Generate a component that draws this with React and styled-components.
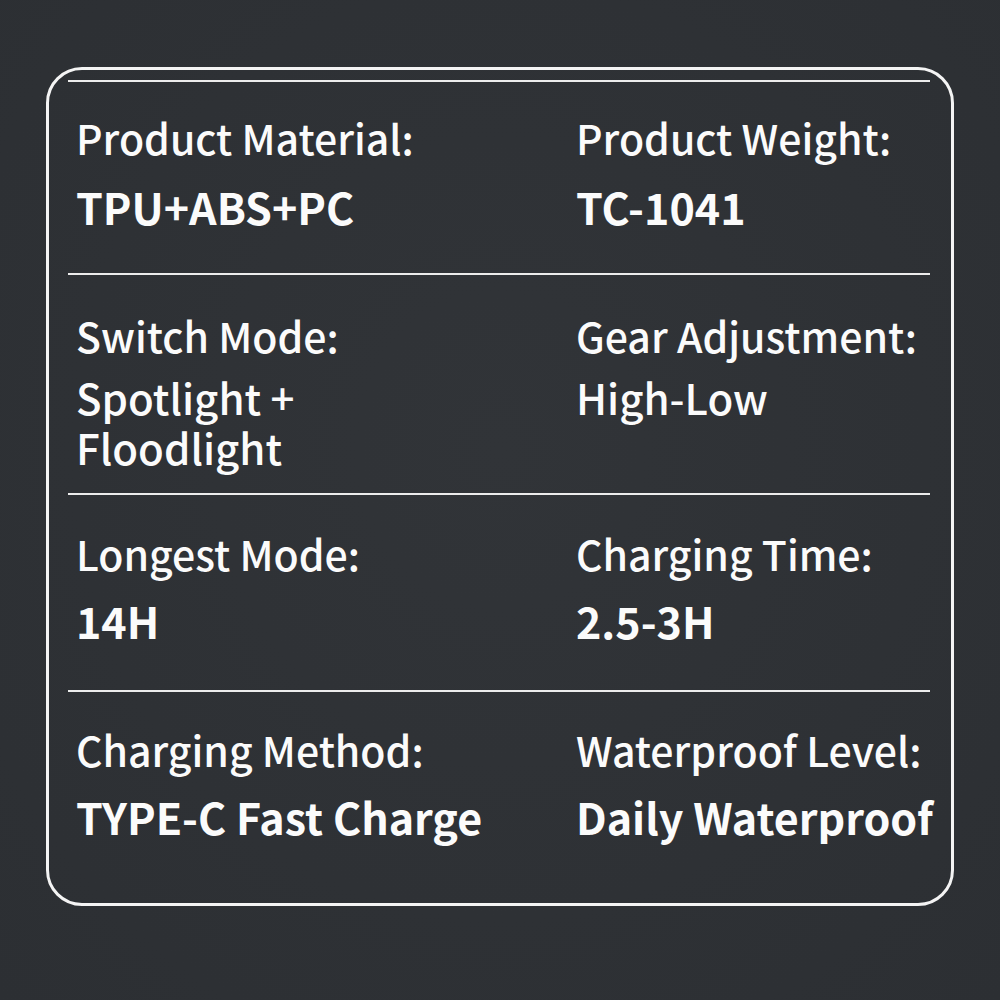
import React from "react";
import styled, { createGlobalStyle } from "styled-components";

const specs = [
  {
    height: 191,
    top: 30,
    gap: 19,
    items: [
      { label: "Product Material:", value: ["TPU+ABS+PC"] },
      { label: "Product Weight:", value: ["TC-1041"] },
    ],
  },
  {
    height: 218,
    top: 35,
    gap: 12,
    items: [
      { label: "Switch Mode:", value: ["Spotlight +", "Floodlight"], light: true },
      { label: "Gear Adjustment:", value: ["High-Low"], light: true },
    ],
  },
  {
    height: 195,
    top: 33,
    gap: 17,
    items: [
      { label: "Longest Mode:", value: ["14H"] },
      { label: "Charging Time:", value: ["2.5-3H"] },
    ],
  },
  {
    height: 0,
    top: 32,
    gap: 17,
    items: [
      { label: "Charging Method:", value: ["TYPE-C Fast Charge"] },
      { label: "Waterproof Level:", value: ["Daily Waterproof"] },
    ],
  },
];

const App = () => {
  return (
    <>
      <GlobalStyle />
      <Page>
        <Card>
          <Rule />
          {specs.map((row, i) => (
            <React.Fragment key={i}>
              {i > 0 && <Rule />}
              <Row $height={row.height} $top={row.top}>
                {row.items.map((item) => (
                  <Cell key={item.label} $gap={row.gap}>
                    <Label>{item.label}</Label>
                    <Value $light={item.light}>
                      {item.value.map((line, j) => (
                        <React.Fragment key={line}>
                          {j > 0 && <br />}
                          {line}
                        </React.Fragment>
                      ))}
                    </Value>
                  </Cell>
                ))}
              </Row>
            </React.Fragment>
          ))}
        </Card>
      </Page>
    </>
  );
};

export default App;

const GlobalStyle = createGlobalStyle`
  html, body {
    margin: 0;
    background: #2e3135;
  }
  body {
    font-family: "Noto Sans CJK SC", "Noto Sans", sans-serif;
    color: #fbfbfb;
  }
`;

const Page = styled.div`
  width: 1000px;
  height: 1000px;
  box-sizing: border-box;
  padding: 67px 46px 94px 46px;
  background: radial-gradient(ellipse at 50% 45%, #313438 0%, #2c2f33 100%);
`;

const Card = styled.div`
  height: 100%;
  box-sizing: border-box;
  border: 3px solid #f4f4f4;
  border-radius: 36px;
  padding: 10px 21px 0 19px;
  display: flex;
  flex-direction: column;
`;

const Rule = styled.div`
  height: 2px;
  background: #ececec;
  flex-shrink: 0;
`;

const Row = styled.div`
  display: grid;
  grid-template-columns: 500px 1fr;
  box-sizing: border-box;
  padding: ${(p) => p.$top}px 0 0 8px;
  ${(p) => (p.$height ? `height: ${p.$height}px;` : "flex: 1;")}
`;

const Cell = styled.div`
  display: flex;
  flex-direction: column;
  gap: ${(p) => p.$gap}px;
`;

const Label = styled.div`
  font-size: 41px;
  font-weight: 500;
  line-height: 50px;
  white-space: nowrap;
`;

const Value = styled.div`
  font-size: ${(p) => (p.$light ? 42 : 43)}px;
  font-weight: ${(p) => (p.$light ? 500 : 700)};
  line-height: 50px;
  white-space: nowrap;
`;
